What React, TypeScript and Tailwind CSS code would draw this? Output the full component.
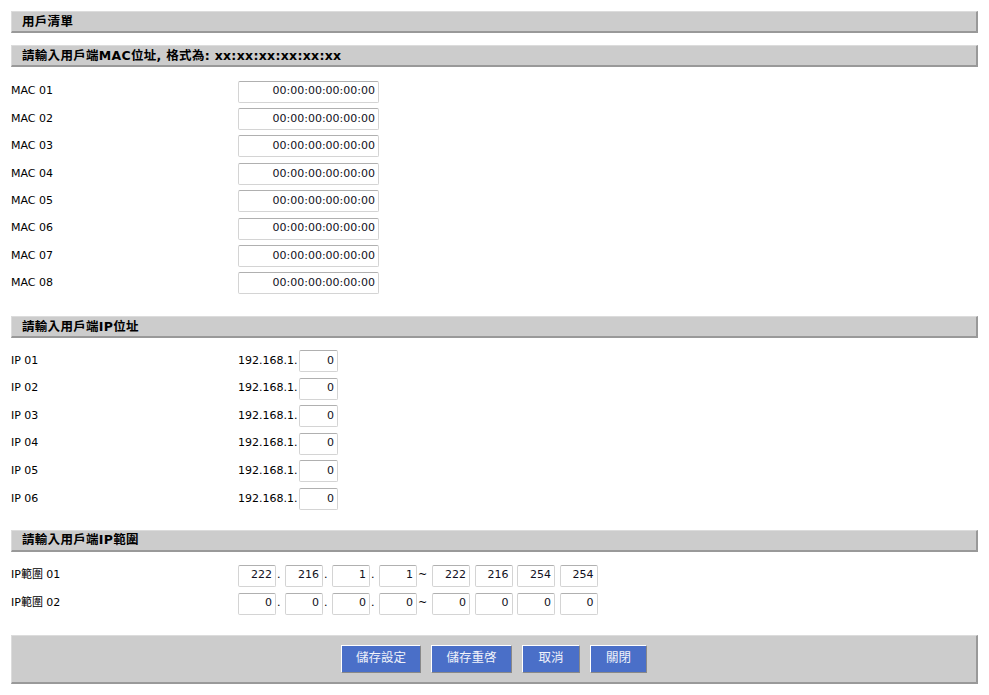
import React from 'react';

const font = { fontFamily: '"DejaVu Sans", "Noto Sans CJK TC", sans-serif' };

function SectionHeader({ title }: { title: string }) {
  return (
    <div className="h-[22px] bg-[#cccccc] border-t border-l border-t-[#dcdcdc] border-l-[#dcdcdc] border-r-2 border-b-2 border-r-[#999999] border-b-[#999999] flex items-center pl-[10px] pt-[1px] text-[12.5px] tracking-[0.3px] font-bold text-black">
      {title}
    </div>
  );
}

function Field({ value, className }: { value: string; className: string }) {
  return (
    <div
      className={`h-[22px] bg-white border border-[#d4d4d4] border-t-[#b0b0b0] rounded-[2px] flex items-center justify-end pr-[3px] text-[11px] text-[#111122] ${className}`}
    >
      {value}
    </div>
  );
}

function Row({ label, children, h = 'h-[27.4px]' }: { label: string; children: React.ReactNode; h?: string }) {
  return (
    <div className={`${h} flex items-center`}>
      <div className="w-[227px] text-[11px] text-black">{label}</div>
      <div className="flex items-center">{children}</div>
    </div>
  );
}

export default function App() {
  const macs = ['01', '02', '03', '04', '05', '06', '07', '08'];
  const ips = ['01', '02', '03', '04', '05', '06'];
  const ranges = [
    { label: 'IP範圍 01', from: ['222', '216', '1', '1'], to: ['222', '216', '254', '254'] },
    { label: 'IP範圍 02', from: ['0', '0', '0', '0'], to: ['0', '0', '0', '0'] },
  ];
  const buttons = [
    { text: '儲存設定', w: 'w-[80px]' },
    { text: '儲存重啓', w: 'w-[81px]' },
    { text: '取消', w: 'w-[58px]' },
    { text: '關閉', w: 'w-[57px]' },
  ];

  return (
    <div className="w-[989px] h-[695px] bg-white px-[11px] pt-[11px]" style={font}>
      <SectionHeader title="用戶清單" />
      <div className="mt-[12px]">
        <SectionHeader title="請輸入用戶端MAC位址, 格式為:  xx:xx:xx:xx:xx:xx" />
      </div>
      <div className="mt-[11px]">
        {macs.map((m) => (
          <Row key={m} label={`MAC ${m}`}>
            <Field value="00:00:00:00:00:00" className="w-[141px]" />
          </Row>
        ))}
      </div>

      <div className="mt-[19px]">
        <SectionHeader title="請輸入用戶端IP位址" />
      </div>
      <div className="mt-[9px]">
        {ips.map((n) => (
          <Row key={n} label={`IP ${n}`} h="h-[27.6px]">
            <span className="w-[61px] text-[11px] text-black">192.168.1.</span>
            <Field value="0" className="w-[39px]" />
          </Row>
        ))}
      </div>

      <div className="mt-[17px]">
        <SectionHeader title="請輸入用戶端IP範圍" />
      </div>
      <div className="mt-[10px]">
        {ranges.map((r) => (
          <Row key={r.label} label={r.label} h="h-[28px]">
            {r.from.map((v, i) => (
              <React.Fragment key={i}>
                <Field value={v} className="w-[38px]" />
                {i < 3 ? (
                  <span className="w-[9px] text-[11px] text-black pl-[1px]">.</span>
                ) : (
                  <span className="w-[15px] text-[11px] text-black pl-[1px]">~</span>
                )}
              </React.Fragment>
            ))}
            <div className="flex gap-[4.5px]">
              {r.to.map((v, i) => (
                <Field key={i} value={v} className="w-[38px]" />
              ))}
            </div>
          </Row>
        ))}
      </div>

      <div className="mt-[17px] h-[49px] bg-[#cccccc] border-t border-l border-t-[#dcdcdc] border-l-[#dcdcdc] border-r-2 border-b-2 border-r-[#999999] border-b-[#999999] flex items-center justify-center gap-[10px]">
        {buttons.map((b) => (
          <button
            key={b.text}
            className={`${b.w} h-[28px] bg-[#4a6fc8] border border-t-white border-l-white border-r-[#888888] border-b-[#888888] text-[12.5px] text-[#f0f2fa] flex items-center justify-center`}
          >
            {b.text}
          </button>
        ))}
      </div>
    </div>
  );
}
